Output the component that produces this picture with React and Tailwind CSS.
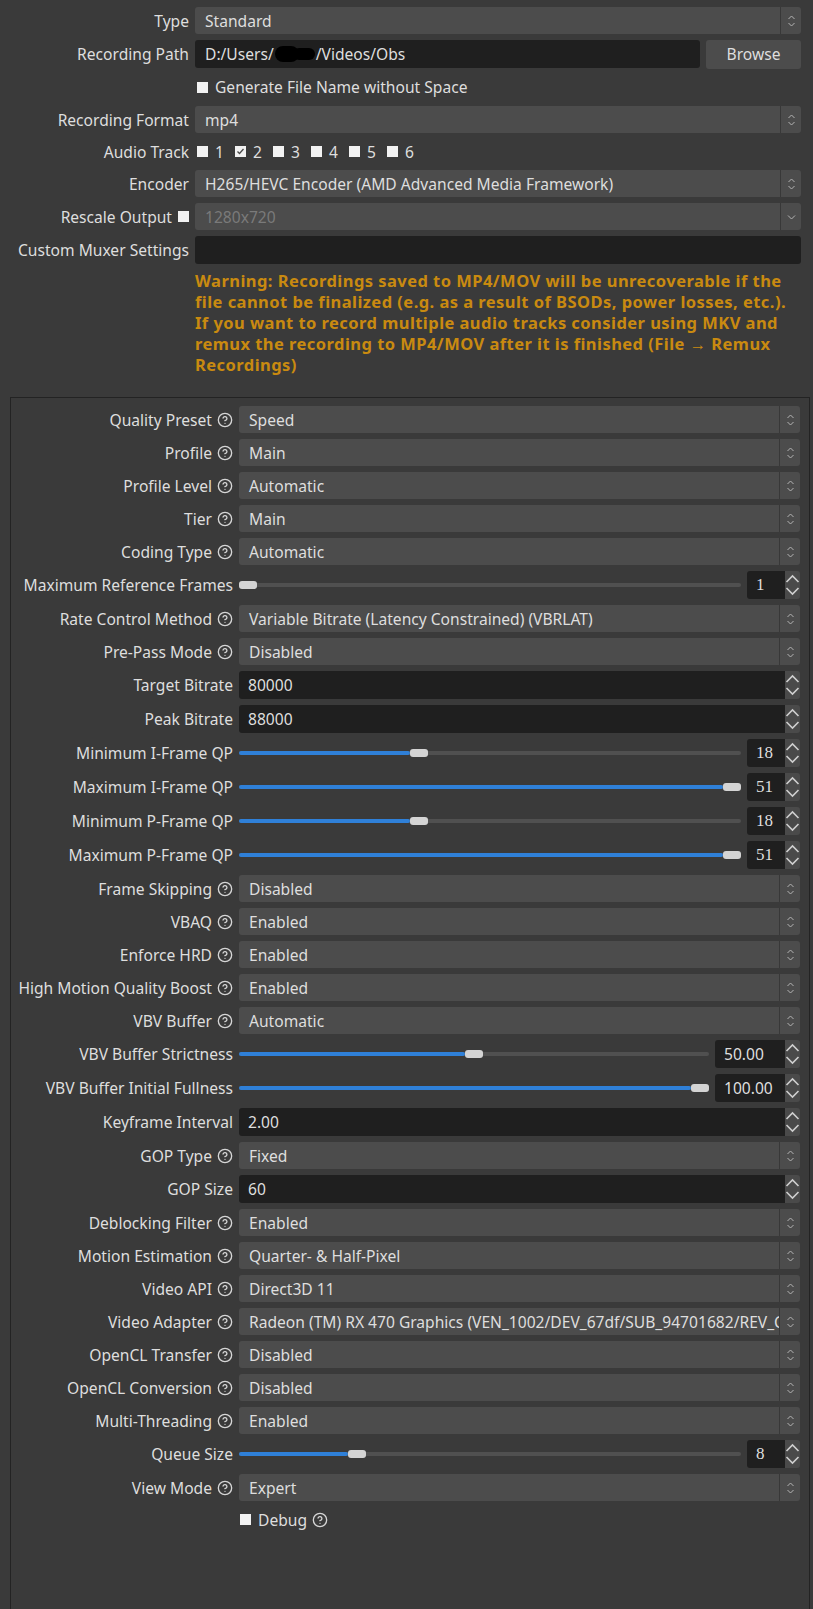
import React from "react";
import { CircleHelp } from "lucide-react";

const TEXT = "text-[#dedede]";

function ComboArrows({ single }) {
  return (
    <svg width="9" height="14" viewBox="0 0 9 14" fill="none" stroke="#b4b4b4" strokeWidth="1">
      {single ? (
        <polyline points="1,5.5 4.5,9 8,5.5" />
      ) : (
        <>
          <polyline points="1.5,5 4.5,2 7.5,5" />
          <polyline points="1.5,9 4.5,12 7.5,9" />
        </>
      )}
    </svg>
  );
}

function Combo({ value, disabled, single }) {
  return (
    <div className="flex h-[27px] w-full min-w-0 rounded-[3px] bg-[#4c4c4c]">
      <div
        className={`flex min-w-0 flex-1 items-center overflow-hidden whitespace-nowrap pl-[10px] ${
          disabled ? "text-[#7a7a7a]" : TEXT
        }`}
      >
        {value}
      </div>
      <div className="flex w-[21px] shrink-0 items-center justify-center border-l border-[#383838]">
        <ComboArrows single={single} />
      </div>
    </div>
  );
}

function SpinButtons() {
  return (
    <div className="flex w-[15px] shrink-0 items-center justify-center rounded-r-[3px] bg-[#4a4a4a]">
      <svg width="15" height="28" viewBox="0 0 15 28" fill="none" stroke="#cfcfcf" strokeWidth="1.6">
        <polyline points="1.5,11 7.5,5 13.5,11" />
        <polyline points="1.5,17 7.5,23 13.5,17" />
      </svg>
    </div>
  );
}

function Spin({ value, serif, className = "" }) {
  return (
    <div className={`flex h-[28px] ${className}`}>
      <div
        className={`flex min-w-0 flex-1 items-center rounded-l-[3px] bg-[#1f1f1f] pl-[9px] ${TEXT} ${
          serif ? "font-['Liberation_Serif',serif] text-[17px]" : ""
        }`}
      >
        {value}
      </div>
      <SpinButtons />
    </div>
  );
}

function Slider({ pct, value, wide }) {
  return (
    <div className="flex h-[28px] w-full items-center gap-[6px]">
      <div className="relative h-[28px] flex-1">
        <div className="absolute left-0 right-0 top-[12px] h-[4px] rounded-[2px] bg-[#505050]" />
        <div
          className="absolute left-0 top-[12px] h-[4px] rounded-[2px] bg-[#2f80d8]"
          style={{ width: `calc(${pct} * (100% - 18px))` }}
        />
        <div
          className="absolute top-[10px] h-[8px] w-[18px] rounded-[3px] bg-[#d4d4d4]"
          style={{ left: `calc(${pct} * (100% - 18px))` }}
        />
      </div>
      <Spin value={value} serif={!wide} className={wide ? "w-[85px]" : "w-[53px]"} />
    </div>
  );
}

function Check({ checked }) {
  return (
    <span className="relative inline-flex h-[11px] w-[11px] shrink-0 items-center justify-center bg-[#f2f2f2]">
      {checked && (
        <svg width="9" height="9" viewBox="0 0 9 9" fill="none" stroke="#4a4a4a" strokeWidth="1.3">
          <polyline points="1.5,4.5 3.5,6.5 7.5,2" />
        </svg>
      )}
    </span>
  );
}

function Help() {
  return <CircleHelp size={16} strokeWidth={2} color="#d6d6d6" className="ml-[5px] shrink-0" />;
}

function TopRow({ label, h = 27, extra, children }) {
  return (
    <div className="flex items-center" style={{ height: h }}>
      <div className={`flex w-[189px] shrink-0 items-center justify-end whitespace-nowrap ${TEXT}`}>
        {label}
        {extra}
      </div>
      <div className="ml-[6px] flex min-w-0 flex-1 items-center">{children}</div>
    </div>
  );
}

const rows = [
  { l: "Quality Preset", h: 1, t: "c", v: "Speed" },
  { l: "Profile", h: 1, t: "c", v: "Main" },
  { l: "Profile Level", h: 1, t: "c", v: "Automatic" },
  { l: "Tier", h: 1, t: "c", v: "Main" },
  { l: "Coding Type", h: 1, t: "c", v: "Automatic" },
  { l: "Maximum Reference Frames", t: "s", v: "1", p: 0 },
  { l: "Rate Control Method", h: 1, t: "c", v: "Variable Bitrate (Latency Constrained) (VBRLAT)" },
  { l: "Pre-Pass Mode", h: 1, t: "c", v: "Disabled" },
  { l: "Target Bitrate", t: "n", v: "80000" },
  { l: "Peak Bitrate", t: "n", v: "88000" },
  { l: "Minimum I-Frame QP", t: "s", v: "18", p: 18 / 51 },
  { l: "Maximum I-Frame QP", t: "s", v: "51", p: 1 },
  { l: "Minimum P-Frame QP", t: "s", v: "18", p: 18 / 51 },
  { l: "Maximum P-Frame QP", t: "s", v: "51", p: 1 },
  { l: "Frame Skipping", h: 1, t: "c", v: "Disabled" },
  { l: "VBAQ", h: 1, t: "c", v: "Enabled" },
  { l: "Enforce HRD", h: 1, t: "c", v: "Enabled" },
  { l: "High Motion Quality Boost", h: 1, t: "c", v: "Enabled" },
  { l: "VBV Buffer", h: 1, t: "c", v: "Automatic" },
  { l: "VBV Buffer Strictness", t: "s", v: "50.00", p: 0.5, w: 1 },
  { l: "VBV Buffer Initial Fullness", t: "s", v: "100.00", p: 1, w: 1 },
  { l: "Keyframe Interval", t: "n", v: "2.00" },
  { l: "GOP Type", h: 1, t: "c", v: "Fixed" },
  { l: "GOP Size", t: "n", v: "60" },
  { l: "Deblocking Filter", h: 1, t: "c", v: "Enabled" },
  { l: "Motion Estimation", h: 1, t: "c", v: "Quarter- & Half-Pixel" },
  { l: "Video API", h: 1, t: "c", v: "Direct3D 11" },
  {
    l: "Video Adapter",
    h: 1,
    t: "c",
    v: "Radeon (TM) RX 470 Graphics (VEN_1002/DEV_67df/SUB_94701682/REV_CF)",
  },
  { l: "OpenCL Transfer", h: 1, t: "c", v: "Disabled" },
  { l: "OpenCL Conversion", h: 1, t: "c", v: "Disabled" },
  { l: "Multi-Threading", h: 1, t: "c", v: "Enabled" },
  { l: "Queue Size", t: "s", v: "8", p: 7 / 31 },
  { l: "View Mode", h: 1, t: "c", v: "Expert" },
];

function PanelRow({ r }) {
  const height = r.t === "c" ? 27 : 28;
  return (
    <div className="flex items-center" style={{ height }}>
      <div className={`flex w-[222px] shrink-0 items-center justify-end whitespace-nowrap ${TEXT}`}>
        {r.l}
        {r.h ? <Help /> : null}
      </div>
      <div className="ml-[6px] flex min-w-0 flex-1 items-center">
        {r.t === "c" && <Combo value={r.v} />}
        {r.t === "n" && <Spin value={r.v} className="w-full" />}
        {r.t === "s" && <Slider pct={r.p} value={r.v} wide={r.w} />}
      </div>
    </div>
  );
}

export default function App() {
  return (
    <div className="flex h-[1609px] w-[813px] flex-col overflow-hidden bg-[#3a3a3a] font-['Noto_Sans',sans-serif] text-[15.6px] leading-[20px]">
      <div className="flex flex-col gap-[6px] pr-[12px] pt-[7px]">
        <TopRow label="Type">
          <Combo value="Standard" />
        </TopRow>
        <TopRow label="Recording Path" h={28}>
          <div className={`flex h-[28px] flex-1 items-center rounded-[3px] bg-[#1f1f1f] pl-[10px] ${TEXT}`}>
            D:/Users/
            <span className="mx-[1px] inline-flex items-center">
              <span className="inline-block h-[16px] w-[24px] rounded-full bg-black" />
              <span className="-ml-[6px] inline-block h-[12px] w-[22px] rounded-full bg-black" />
            </span>
            /Videos/Obs
          </div>
          <div
            className={`ml-[6px] flex h-[29px] w-[95px] items-center justify-center rounded-[3px] bg-[#4c4c4c] ${TEXT}`}
          >
            Browse
          </div>
        </TopRow>
        <TopRow label="" h={26}>
          <div className={`flex items-center pl-[2px] ${TEXT}`}>
            <Check />
            <span className="ml-[7px]">Generate File Name without Space</span>
          </div>
        </TopRow>
        <TopRow label="Recording Format">
          <Combo value="mp4" />
        </TopRow>
        <TopRow label="Audio Track" h={25}>
          <div className={`flex items-center pl-[2px] ${TEXT}`}>
            {[1, 2, 3, 4, 5, 6].map((n) => (
              <span key={n} className="flex w-[38px] items-center">
                <Check checked={n === 2} />
                <span className="ml-[7px]">{n}</span>
              </span>
            ))}
          </div>
        </TopRow>
        <TopRow label="Encoder">
          <Combo value="H265/HEVC Encoder (AMD Advanced Media Framework)" />
        </TopRow>
        <TopRow
          label="Rescale Output"
          extra={
            <span className="ml-[6px] inline-flex">
              <Check />
            </span>
          }
        >
          <Combo value="1280x720" disabled single />
        </TopRow>
        <TopRow label="Custom Muxer Settings" h={28}>
          <div className="h-[28px] flex-1 rounded-[3px] bg-[#1f1f1f]" />
        </TopRow>
        <div className="ml-[195px] text-[16.5px] font-bold leading-[21px] tracking-[0.45px] text-[#c98a10]">
          <div className="whitespace-nowrap">Warning: Recordings saved to MP4/MOV will be unrecoverable if the</div>
          <div className="whitespace-nowrap">file cannot be finalized (e.g. as a result of BSODs, power losses, etc.).</div>
          <div className="whitespace-nowrap">If you want to record multiple audio tracks consider using MKV and</div>
          <div className="whitespace-nowrap">remux the recording to MP4/MOV after it is finished (File → Remux</div>
          <div className="whitespace-nowrap">Recordings)</div>
        </div>
      </div>

      <div className="ml-[10px] mr-[3px] mt-[22px] flex flex-1 flex-col gap-[6px] border border-b-0 border-[#232323] pr-[9px] pt-[8px]">
        {rows.map((r) => (
          <PanelRow key={r.l} r={r} />
        ))}
        <div className="flex h-[25px] items-center">
          <div className="w-[222px] shrink-0" />
          <div className={`ml-[7px] flex items-center ${TEXT}`}>
            <Check />
            <span className="ml-[7px]">Debug</span>
            <Help />
          </div>
        </div>
      </div>
    </div>
  );
}
